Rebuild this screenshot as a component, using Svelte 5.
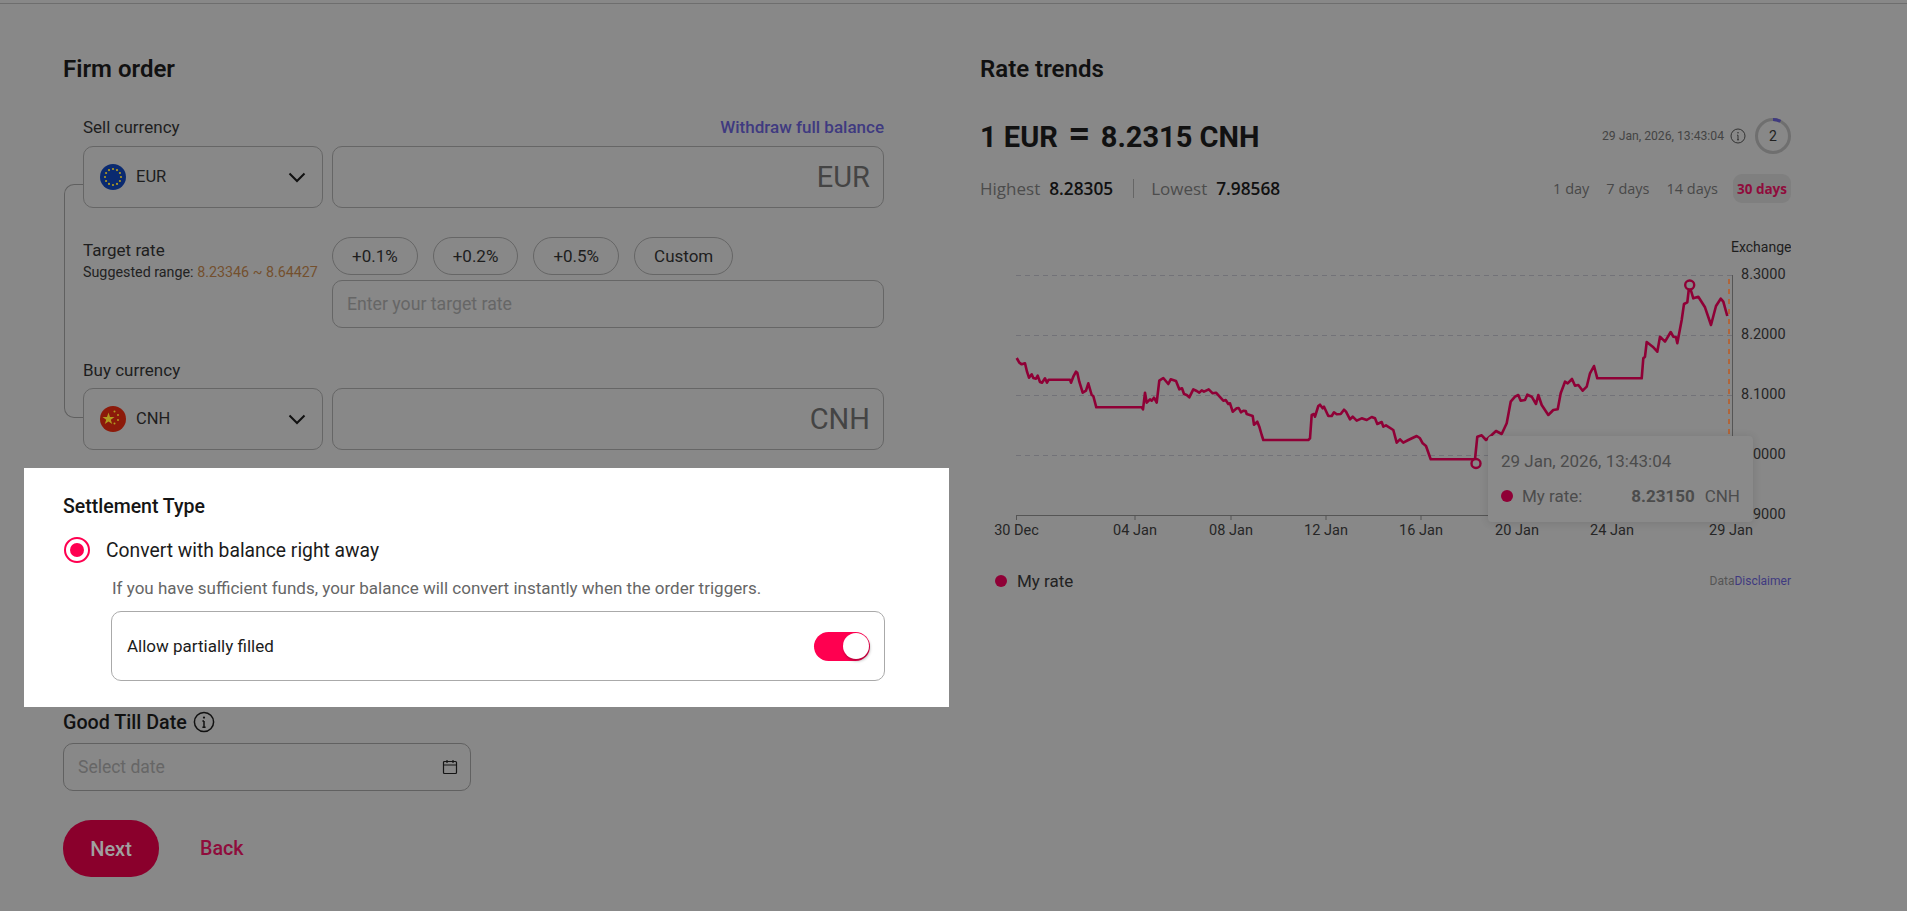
<script lang="ts">
  // trend line traced in crop units: page x = 980 + u / 3, page y = 230 + v / 3
  const first = [110,384,118,398,125,403,135,400,141,425,147,443,155,433,160,444,168,446,173,437,180,456,186,458,195,445,201,458,206,449,270,449,273,458,280,440,288,425,292,428,298,455,308,488,318,482,325,460,335,495,340,498,349,532,485,532,489,538,495,488,500,518,510,508,515,512,522,503,530,518,538,452,550,444,565,462,572,448,588,453,598,478,606,475,612,492,620,495,628,502,640,478,650,483,658,488,665,481,672,485,686,478,698,490,708,488,730,512,737,510,745,522,750,520,758,545,770,535,776,534,783,547,790,542,797,543,800,552,818,558,822,584,832,575,838,590,845,615,850,630,985,630,990,625,995,555,1002,552,1005,560,1015,528,1020,524,1028,535,1032,530,1045,558,1055,558,1062,547,1070,553,1082,552,1092,539,1098,545,1110,568,1118,560,1130,572,1145,565,1160,570,1175,561,1185,565,1192,582,1205,576,1210,590,1218,586,1240,600,1250,638];
  const second = [0,628,10,638,25,630,50,618,60,625,68,640,78,648,92,688,225,688,232,620,245,616,258,630,275,615,288,603,305,612,320,580,332,515,345,500,355,495,362,512,375,510,382,494,395,500,408,522,415,495,425,525,445,555,460,540,473,538,482,490,495,455,503,460,516,447,525,467,535,465,548,482,560,470,570,430,582,408,592,445,725,445,730,385,735,380,740,336,758,350,772,365,780,320,795,335,812,306,820,320,828,322,832,340,845,270,852,222,862,217,868,165,880,205,895,200,915,232,933,285,948,228,962,206,970,215,982,258];

  function toPoints(raw: number[], offset: number): string {
    const out: string[] = [];
    for (let i = 0; i < raw.length; i += 2) {
      out.push(`${(980 + (raw[i] + offset) / 3).toFixed(1)},${(230 + raw[i + 1] / 3).toFixed(1)}`);
    }
    return out.join(' ');
  }

  const line = toPoints(first, 0) + ' ' + toPoints(second, 1260);
  const gridY = [275.5, 335.5, 395.5, 455.5];
  const yLabels = [
    { y: 274, t: '8.3000' },
    { y: 334, t: '8.2000' },
    { y: 394, t: '8.1000' },
    { y: 454, t: '8.0000' },
    { y: 514, t: '7.9000' }
  ];
  const xLabels = [
    { x: 1016.5, t: '30 Dec' },
    { x: 1135, t: '04 Jan' },
    { x: 1231, t: '08 Jan' },
    { x: 1326, t: '12 Jan' },
    { x: 1421, t: '16 Jan' },
    { x: 1517, t: '20 Jan' },
    { x: 1612, t: '24 Jan' },
    { x: 1731, t: '29 Jan' }
  ];
  const chips = ['+0.1%', '+0.2%', '+0.5%', 'Custom'];
  const ranges = ['1 day', '7 days', '14 days'];
  const stars = Array.from({ length: 12 }, (_, i) => {
    const a = (i * Math.PI) / 6;
    return { x: 13 + 8 * Math.cos(a), y: 13 + 8 * Math.sin(a) };
  });
</script>

<div class="page">
  <div class="top"></div>
  <div class="columns">
    <section class="left">
      <h2>Firm order</h2>
      <div class="form">
        <span class="connector"></span>
        <div class="label-row sell">
          <span>Sell currency</span>
          <span class="link">Withdraw full balance</span>
        </div>
        <div class="pair first">
          <div class="select">
            <svg class="flag" viewBox="0 0 26 26">
              <circle cx="13" cy="13" r="13" fill="#0a2a70" />
              {#each stars as s}
                <circle cx={s.x} cy={s.y} r="1.1" fill="#b09a20" />
              {/each}
            </svg>
            <span class="code">EUR</span>
            <svg class="chev" viewBox="0 0 18 11"><path d="M1.5 1.5 9 9l7.5-7.5" /></svg>
          </div>
          <div class="amount">EUR</div>
        </div>

        <div class="target">
          <div class="target-text">
            <div class="target-label">Target rate</div>
            <div class="range">Suggested range: <b>8.23346 ~ 8.64427</b></div>
          </div>
          <div class="target-fields">
            <div class="chips">
              {#each chips as c}
                <span class="chip">{c}</span>
              {/each}
            </div>
            <div class="rate-input">Enter your target rate</div>
          </div>
        </div>

        <div class="label-row buy"><span>Buy currency</span></div>
        <div class="pair second">
          <div class="select">
            <svg class="flag" viewBox="0 0 26 26">
              <circle cx="13" cy="13" r="13" fill="#8c1a0a" />
              <polygon points="8.5,6.5 10,11 14.5,11 10.8,13.7 12.2,18 8.5,15.4 4.8,18 6.2,13.7 2.5,11 7,11" fill="#b09a20" />
              <circle cx="14.5" cy="5.5" r="1" fill="#b09a20" />
              <circle cx="18" cy="9" r="1" fill="#b09a20" />
              <circle cx="18" cy="14" r="1" fill="#b09a20" />
              <circle cx="14.5" cy="17.5" r="1" fill="#b09a20" />
            </svg>
            <span class="code">CNH</span>
            <svg class="chev" viewBox="0 0 18 11"><path d="M1.5 1.5 9 9l7.5-7.5" /></svg>
          </div>
          <div class="amount">CNH</div>
        </div>
      </div>

      <div class="spot">
        <h3>Settlement Type</h3>
        <div class="radio-row">
          <span class="radio"><span class="radio-dot"></span></span>
          <span>Convert with balance right away</span>
        </div>
        <p class="desc">If you have sufficient funds, your balance will convert instantly when the order triggers.</p>
        <div class="partial">
          <span>Allow partially filled</span>
          <span class="toggle"><span class="knob"></span></span>
        </div>
      </div>

      <div class="good-till">
        <span>Good Till Date</span>
        <svg viewBox="0 0 22 22" class="info-lg">
          <circle cx="11" cy="11" r="9.6" />
          <path d="M11 10v6.2M9.4 10H11M9.4 16.2h3.2" />
          <circle class="i-dot" cx="11" cy="6.6" r="1.1" />
        </svg>
      </div>
      <div class="date-input">
        <span>Select date</span>
        <svg viewBox="0 0 16 16" class="cal">
          <rect x="1.5" y="2.5" width="13" height="12" rx="1" />
          <path d="M1.5 6h13M5 1v3M11 1v3" />
        </svg>
      </div>
      <div class="actions">
        <span class="next">Next</span>
        <span class="back">Back</span>
      </div>
    </section>

    <section class="right">
      <h2>Rate trends</h2>
      <div class="rate-row">
        <div class="rate">1 EUR <span class="eq">=</span> 8.2315 CNH</div>
        <div class="stamp">
          <span>29 Jan, 2026, 13:43:04</span>
          <svg viewBox="0 0 16 16" class="info-sm">
            <circle cx="8" cy="8" r="7" />
            <path d="M8 7.2v4.6M7 7.2h1M7 11.8h2" />
            <circle class="i-dot" cx="8" cy="4.7" r=".8" />
          </svg>
          <span class="count">
            <svg viewBox="0 0 36 36">
              <circle class="ring" cx="18" cy="18" r="16.5" />
              <path class="ring-on" d="M18 1.5a16.5 16.5 0 0 1 7.5 1.8" />
            </svg>
            <span class="count-num">2</span>
          </span>
        </div>
      </div>
      <div class="stats-row">
        <div class="stats">
          <span class="muted">Highest</span><b>8.28305</b>
          <span class="sep"></span>
          <span class="muted">Lowest</span><b>7.98568</b>
        </div>
        <div class="ranges">
          {#each ranges as r}
            <span>{r}</span>
          {/each}
          <span class="on">30 days</span>
        </div>
      </div>

      <div class="chart">
        <svg viewBox="980 210 811 350" width="811" height="350">
          <text class="axis-title" x="1731" y="252">Exchange rate</text>
          {#each gridY as y}
            <line class="grid" x1="1016" x2="1732" y1={y} y2={y} />
          {/each}
          <line class="axis" x1="1016" x2="1732" y1="515.5" y2="515.5" />
          <line class="axis" x1="1732.5" x2="1732.5" y1="275" y2="515" />
          {#each xLabels as l}
            <line class="axis" x1={l.x} x2={l.x} y1="515" y2="520" />
            <text class="tick" x={l.x} y="535" text-anchor="middle">{l.t}</text>
          {/each}
          {#each yLabels as l}
            <text class="tick" x="1741" y={l.y + 5}>{l.t}</text>
          {/each}
          <line class="now" x1="1729" x2="1729" y1="279" y2="515" />
          <polyline class="trend" points={line} />
          <circle class="mark" cx="1476" cy="463.5" r="4.5" />
          <circle class="mark" cx="1689.7" cy="285" r="4.5" />
        </svg>
        <div class="tip">
          <div class="tip-date">29 Jan, 2026, 13:43:04</div>
          <div class="tip-row">
            <span class="dot big"></span>
            <span>My rate:</span>
            <b>8.23150</b>
            <span class="unit">CNH</span>
          </div>
        </div>
      </div>

      <div class="legend">
        <div class="legend-item"><span class="dot"></span>My rate</div>
        <div class="disclaimer">Data<span>Disclaimer</span></div>
      </div>
    </section>
  </div>
</div>

<style>
  :global(body) {
    margin: 0;
    background: #888888;
    font-family: Roboto, "Noto Sans", sans-serif;
    color: #161616;
  }

  .page {
    height: 911px;
    overflow: hidden;
    background: #888888;
  }

  .top {
    height: 3px;
    border-bottom: 1px solid #6e6e6e;
  }

  .columns {
    display: flex;
    gap: 96px;
    padding-left: 63px;
  }

  h2 {
    margin: 0;
    padding-top: 52px;
    font-size: 24px;
    line-height: 26px;
    font-weight: 600;
    color: #111;
  }

  .left {
    width: 821px;
    flex: none;
  }

  .right {
    width: 811px;
    flex: none;
  }

  .form {
    position: relative;
    padding-left: 20px;
  }

  .connector {
    position: absolute;
    left: 1px;
    top: 67px;
    width: 19px;
    height: 234px;
    box-sizing: border-box;
    border: 1px solid #606060;
    border-right: 0;
    border-radius: 10px 0 0 10px;
  }

  .label-row {
    display: flex;
    justify-content: space-between;
    font-size: 17px;
    line-height: 20px;
    color: #1e1e1e;
  }

  .sell {
    margin-top: 35px;
  }

  .buy {
    margin-top: 32px;
  }

  .link {
    color: #3f3a80;
    font-weight: 500;
  }

  .pair {
    display: grid;
    grid-template-columns: 240px 552px;
    gap: 9px;
  }

  .pair.first {
    margin-top: 9px;
  }

  .pair.second {
    margin-top: 8px;
  }

  .select,
  .amount {
    height: 62px;
    box-sizing: border-box;
    border: 1px solid #666;
    border-radius: 10px;
    display: flex;
    align-items: center;
  }

  .select {
    padding: 0 16px;
    gap: 10px;
  }

  .flag {
    width: 26px;
    height: 26px;
    flex: none;
  }

  .code {
    font-size: 16.5px;
    padding-bottom: 2px;
    flex: 1;
    color: #1e1e1e;
  }

  .chev {
    width: 18px;
    height: 11px;
    fill: none;
    stroke: #111;
    stroke-width: 2;
  }

  .amount {
    justify-content: flex-end;
    padding-right: 13px;
    font-size: 29px;
    color: #444;
  }

  .target {
    display: grid;
    grid-template-columns: 240px 552px;
    gap: 9px;
    margin-top: 29px;
  }

  .target-text {
    padding-top: 4px;
  }

  .target-label {
    font-size: 17px;
    line-height: 18px;
    color: #1e1e1e;
  }

  .range {
    margin-top: 5px;
    font-size: 14.3px;
    line-height: 17px;
    white-space: nowrap;
    color: #222;
  }

  .range b {
    font-weight: 400;
    color: #74502e;
  }

  .chips {
    display: flex;
    gap: 15px;
  }

  .chip {
    height: 38px;
    box-sizing: border-box;
    border: 1px solid #666;
    border-radius: 19px;
    padding: 0 19px;
    display: flex;
    align-items: center;
    font-size: 17px;
    color: #1e1e1e;
  }

  .rate-input {
    margin-top: 5px;
    height: 48px;
    box-sizing: border-box;
    border: 1px solid #666;
    border-radius: 10px;
    padding-left: 14px;
    display: flex;
    align-items: center;
    font-size: 17.7px;
    color: #666;
  }

  .spot {
    margin: 18px 0 0 -39px;
    width: 925px;
    height: 239px;
    box-sizing: border-box;
    padding: 29px 0 0 39px;
    background: #fff;
  }

  h3 {
    margin: 0;
    font-size: 19.5px;
    line-height: 20px;
    font-weight: 500;
    color: #151515;
  }

  .radio-row {
    margin-top: 20px;
    display: flex;
    align-items: center;
    gap: 16px;
    padding-left: 1px;
    font-size: 19.3px;
    color: #1b1b1b;
  }

  .radio {
    width: 26px;
    height: 26px;
    box-sizing: border-box;
    border: 2px solid #ff0050;
    border-radius: 50%;
    display: flex;
    align-items: center;
    justify-content: center;
  }

  .radio-dot {
    width: 14px;
    height: 14px;
    border-radius: 50%;
    background: #ff0050;
  }

  .desc {
    margin: 15px 0 0 49px;
    font-size: 17px;
    line-height: 20px;
    color: #666;
  }

  .partial {
    margin: 13px 0 0 48px;
    width: 774px;
    height: 70px;
    box-sizing: border-box;
    border: 1px solid #aaa;
    border-radius: 10px;
    padding: 0 14px 0 15px;
    display: flex;
    align-items: center;
    justify-content: space-between;
    font-size: 17px;
    color: #1b1b1b;
  }

  .toggle {
    width: 56px;
    height: 29px;
    border-radius: 15px;
    background: #ff0050;
    display: flex;
    justify-content: flex-end;
    align-items: center;
    padding-right: 1px;
    box-sizing: border-box;
  }

  .knob {
    width: 26px;
    height: 26px;
    border-radius: 50%;
    background: #fff;
    box-shadow: 1px 2px 3px rgba(0, 0, 0, 0.3);
  }

  .good-till {
    margin-top: 4px;
    height: 22px;
    display: flex;
    align-items: center;
    gap: 6px;
    font-size: 19.7px;
    font-weight: 500;
    color: #111;
  }

  .info-lg {
    width: 22px;
    height: 22px;
    fill: none;
    stroke: #111;
    stroke-width: 1.5;
  }

  .i-dot {
    fill: currentColor;
    stroke: none;
  }

  .date-input {
    margin-top: 10px;
    width: 408px;
    height: 48px;
    box-sizing: border-box;
    border: 1px solid #616161;
    border-radius: 10px;
    padding: 0 12px 0 14px;
    display: flex;
    align-items: center;
    justify-content: space-between;
    font-size: 17.5px;
    color: #666;
  }

  .cal {
    width: 16px;
    height: 16px;
    fill: none;
    stroke: #151515;
    stroke-width: 1.2;
  }

  .actions {
    margin-top: 29px;
    display: flex;
    align-items: center;
    gap: 41px;
  }

  .next {
    width: 96px;
    height: 57px;
    border-radius: 28px;
    background: #8a002c;
    color: #a0a0a0;
    display: flex;
    align-items: center;
    justify-content: center;
    font-size: 20px;
    font-weight: 500;
  }

  .back {
    font-size: 19.7px;
    font-weight: 500;
    color: #8f0c3c;
  }

  .rate-row {
    margin-top: 35px;
    height: 37px;
    display: flex;
    align-items: center;
    justify-content: space-between;
  }

  .rate {
    font-size: 29px;
    font-weight: 700;
    line-height: 36px;
    color: #111;
  }

  .eq {
    font-size: 40px;
    line-height: 36px;
    font-weight: 500;
    margin: 0 3px;
  }

  .stamp {
    display: flex;
    align-items: center;
    gap: 6px;
    font-size: 12.2px;
    color: #444;
  }

  .info-sm {
    width: 16px;
    height: 16px;
    fill: none;
    stroke: #333;
    stroke-width: 1;
    color: #333;
  }

  .count {
    position: relative;
    width: 36px;
    height: 36px;
    margin-left: 3px;
  }

  .count svg {
    width: 36px;
    height: 36px;
    fill: none;
    stroke-width: 3;
  }

  .ring {
    stroke: #6f6f6f;
  }

  .ring-on {
    stroke: #3f3a80;
  }

  .count-num {
    position: absolute;
    inset: 0;
    display: flex;
    align-items: center;
    justify-content: center;
    font-size: 14px;
    color: #222;
  }

  .stats-row {
    margin-top: 20px;
    height: 29px;
    display: flex;
    align-items: center;
    justify-content: space-between;
  }

  .stats {
    display: flex;
    align-items: center;
    font-family: "Open Sans", sans-serif;
    font-size: 17px;
  }

  .muted {
    color: #4c4c4c;
  }

  .stats b {
    margin-left: 9px;
    font-weight: 600;
    font-size: 17.3px;
    color: #111;
  }

  .sep {
    width: 1px;
    height: 19px;
    background: #666;
    margin: 0 17px 0 20px;
  }

  .ranges {
    display: flex;
    align-items: center;
    gap: 17px;
    font-family: "Open Sans", sans-serif;
    font-size: 14.5px;
    color: #484848;
  }

  .ranges .on {
    margin-left: -2px;
    height: 29px;
    padding: 0 4px;
    display: flex;
    align-items: center;
    border-radius: 9px;
    background: #7f7f7f;
    color: #8f0c3c;
    font-size: 13.5px;
    font-weight: 700;
  }

  .chart {
    position: relative;
    margin-top: 7px;
    height: 350px;
  }

  .chart svg {
    display: block;
  }

  .axis-title {
    font-size: 14px;
    fill: #1e1e1e;
  }

  .grid {
    stroke: #727278;
    stroke-dasharray: 5 4;
  }

  .axis {
    stroke: #555;
  }

  .tick {
    font-size: 14.5px;
    fill: #262626;
  }

  .now {
    stroke: #b0653a;
    stroke-width: 2;
    stroke-dasharray: 5 5;
  }

  .trend {
    fill: none;
    stroke: #8f0036;
    stroke-width: 2.6;
    stroke-linejoin: round;
  }

  .mark {
    fill: #888;
    stroke: #8f0036;
    stroke-width: 2.4;
  }

  .tip {
    position: absolute;
    left: 508px;
    top: 226px;
    width: 265px;
    height: 86px;
    box-sizing: border-box;
    padding: 15px 13px;
    background: #8a8a8a;
    border-radius: 4px;
    box-shadow: 0 1px 8px rgba(0, 0, 0, 0.12);
    font-size: 17px;
    line-height: 20px;
    color: #4c4c4c;
  }

  .tip-row {
    margin-top: 15px;
    display: flex;
    align-items: center;
  }

  .tip-row b {
    margin-left: auto;
    font-weight: 700;
  }

  .unit {
    margin-left: 10px;
  }

  .dot {
    width: 12px;
    height: 12px;
    border-radius: 50%;
    background: #8f0036;
    flex: none;
  }

  .dot.big {
    margin-right: 9px;
  }

  .legend {
    margin-top: 11px;
    height: 20px;
    display: flex;
    align-items: center;
    justify-content: space-between;
  }

  .legend-item {
    display: flex;
    align-items: center;
    gap: 10px;
    padding-left: 15px;
    font-size: 17px;
    color: #222;
  }

  .disclaimer {
    font-size: 12px;
    color: #555;
  }

  .disclaimer span {
    color: #3f3a80;
  }
</style>
